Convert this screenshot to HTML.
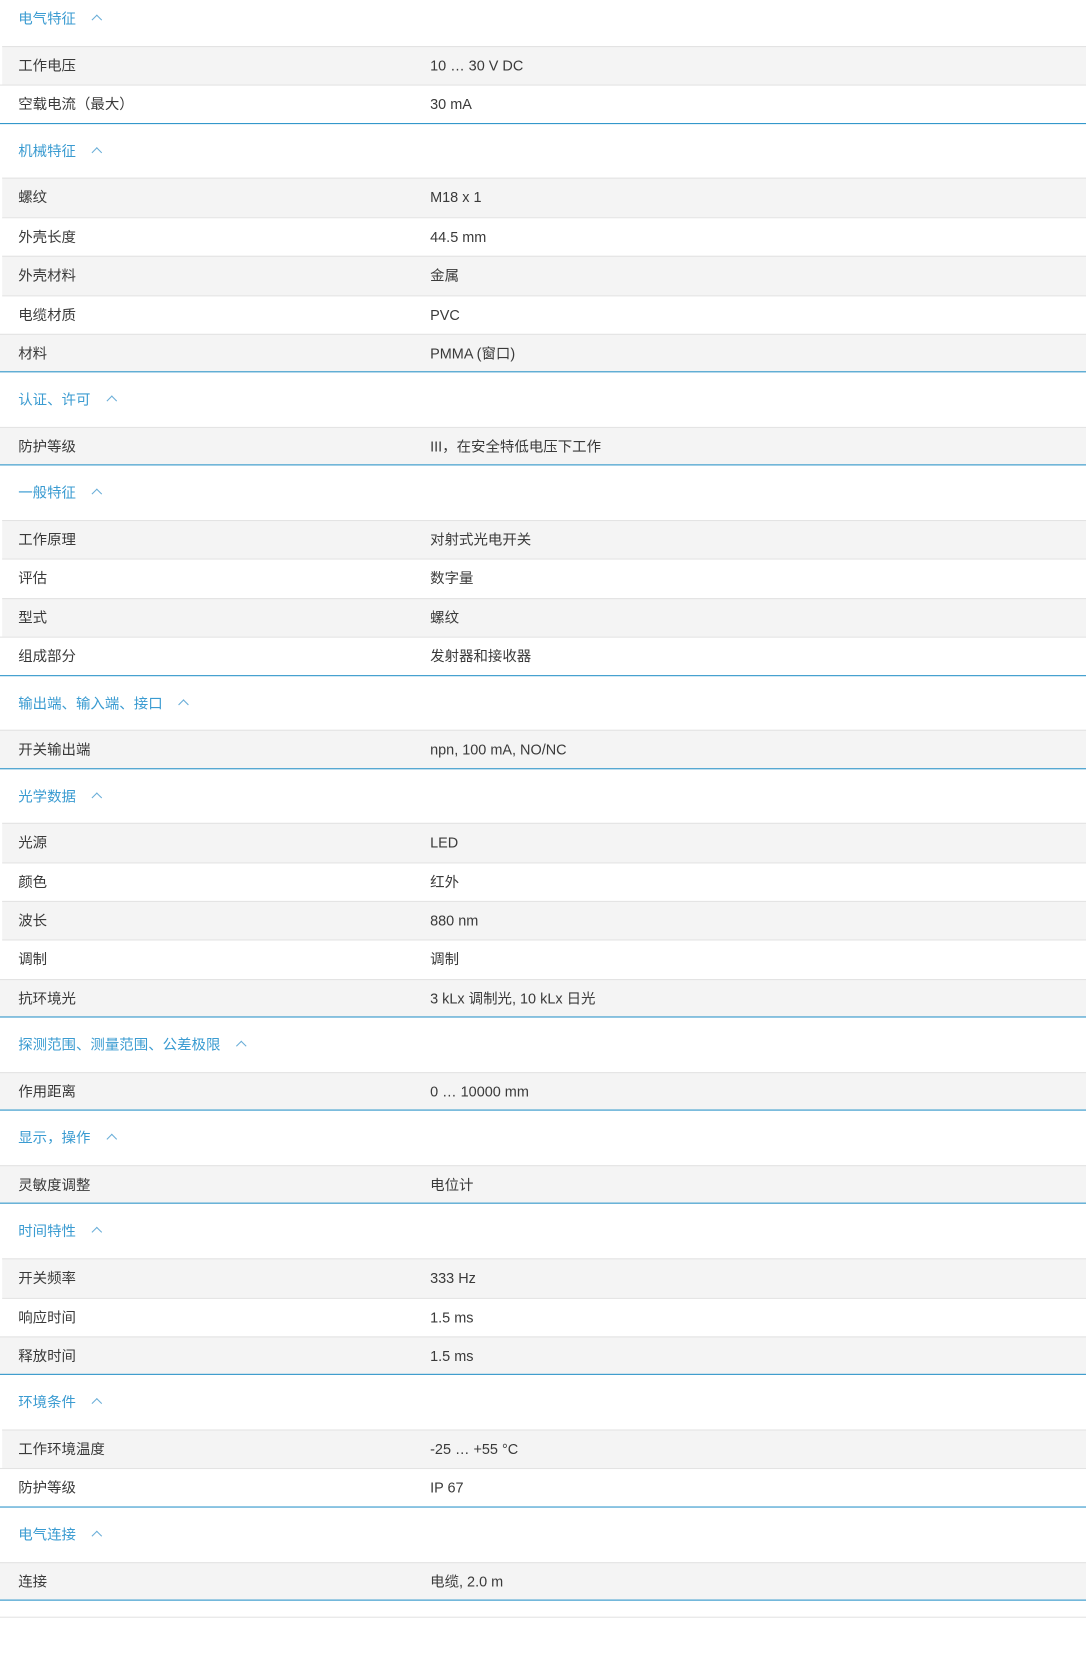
<!DOCTYPE html>
<html><head><meta charset="utf-8"><style>
html,body{margin:0;padding:0;background:#fff;width:1086px;height:1678px;overflow:hidden}
#w{width:1015px;transform:scale(1.06995);transform-origin:0 0;font-family:"Liberation Sans","Noto Sans CJK SC",sans-serif;font-size:13.5px;color:#3a3a3a}
.h{height:50.8px;line-height:52px;padding-left:17px;color:#3a9bd1;box-sizing:border-box}
.s:first-child .h{height:43px;line-height:36px}
.h span.c{display:inline-block;width:6px;height:6px;border-left:1.3px solid #6aaed8;border-top:1.3px solid #6aaed8;transform:rotate(45deg);margin-left:16px;position:relative;top:0px}
.r{height:36.35px;box-sizing:border-box;border-top:1px solid #e3e3e3;line-height:35px;position:relative;margin-left:2px}
.r:nth-child(even){background:#f4f4f4}
.r.l{border-bottom:1.5px solid #2a93c9;margin-left:0}
.r .k{position:absolute;left:15px}
.r .v{position:absolute;left:400px}
.r.l .k{left:17px}
.r.l .v{left:402px}
.end{height:15px;border-bottom:1px solid #e3e3e3}
</style></head><body><div id="w">
<div class="s"><div class="h">电气特征<span class="c"></span></div>
<div class="r"><span class="k">工作电压</span><span class="v">10 … 30 V DC</span></div>
<div class="r l"><span class="k">空载电流（最大）</span><span class="v">30 mA</span></div></div>

<div class="s"><div class="h">机械特征<span class="c"></span></div>
<div class="r"><span class="k">螺纹</span><span class="v">M18 x 1</span></div>
<div class="r"><span class="k">外壳长度</span><span class="v">44.5 mm</span></div>
<div class="r"><span class="k">外壳材料</span><span class="v">金属</span></div>
<div class="r"><span class="k">电缆材质</span><span class="v">PVC</span></div>
<div class="r l"><span class="k">材料</span><span class="v">PMMA (窗口)</span></div></div>

<div class="s"><div class="h">认证、许可<span class="c"></span></div>
<div class="r l"><span class="k">防护等级</span><span class="v">III，在安全特低电压下工作</span></div></div>

<div class="s"><div class="h">一般特征<span class="c"></span></div>
<div class="r"><span class="k">工作原理</span><span class="v">对射式光电开关</span></div>
<div class="r"><span class="k">评估</span><span class="v">数字量</span></div>
<div class="r"><span class="k">型式</span><span class="v">螺纹</span></div>
<div class="r l"><span class="k">组成部分</span><span class="v">发射器和接收器</span></div></div>

<div class="s"><div class="h">输出端、输入端、接口<span class="c"></span></div>
<div class="r l"><span class="k">开关输出端</span><span class="v">npn, 100 mA, NO/NC</span></div></div>

<div class="s"><div class="h">光学数据<span class="c"></span></div>
<div class="r"><span class="k">光源</span><span class="v">LED</span></div>
<div class="r"><span class="k">颜色</span><span class="v">红外</span></div>
<div class="r"><span class="k">波长</span><span class="v">880 nm</span></div>
<div class="r"><span class="k">调制</span><span class="v">调制</span></div>
<div class="r l"><span class="k">抗环境光</span><span class="v">3 kLx 调制光, 10 kLx 日光</span></div></div>

<div class="s"><div class="h">探测范围、测量范围、公差极限<span class="c"></span></div>
<div class="r l"><span class="k">作用距离</span><span class="v">0 … 10000 mm</span></div></div>

<div class="s"><div class="h">显示，操作<span class="c"></span></div>
<div class="r l"><span class="k">灵敏度调整</span><span class="v">电位计</span></div></div>

<div class="s"><div class="h">时间特性<span class="c"></span></div>
<div class="r"><span class="k">开关频率</span><span class="v">333 Hz</span></div>
<div class="r"><span class="k">响应时间</span><span class="v">1.5 ms</span></div>
<div class="r l"><span class="k">释放时间</span><span class="v">1.5 ms</span></div></div>

<div class="s"><div class="h">环境条件<span class="c"></span></div>
<div class="r"><span class="k">工作环境温度</span><span class="v">-25 … +55 °C</span></div>
<div class="r l"><span class="k">防护等级</span><span class="v">IP 67</span></div></div>

<div class="s"><div class="h">电气连接<span class="c"></span></div>
<div class="r l"><span class="k">连接</span><span class="v">电缆, 2.0 m</span></div></div>
<div class="end"></div>
</div></body></html>
